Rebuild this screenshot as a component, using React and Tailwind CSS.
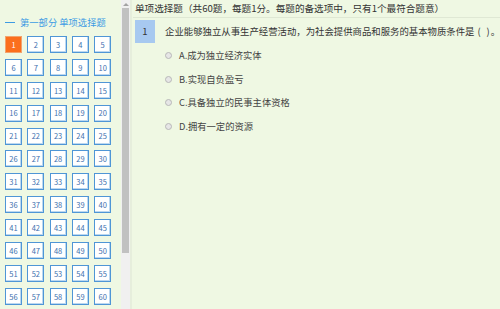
import React from 'react';

const font = { fontFamily: '"Noto Sans CJK SC", "Liberation Sans", sans-serif' };

const options = ['A.成为独立经济实体', 'B.实现自负盈亏', 'C.具备独立的民事主体资格', 'D.拥有一定的资源'];

function NumBox({ n, active }) {
  return (
    <div
      className={`w-[17px] h-[17px] flex items-center justify-center text-[7.5px] leading-none ${
        active
          ? 'bg-[#fb6f1d] border border-[#f2a46e] text-white'
          : 'bg-white border border-[#4f96d6] text-[#3d6fae] shadow-[inset_-1px_-1px_0_#bcd8f0]'
      }`}
    >
      {n}
    </div>
  );
}

export default function App() {
  const nums = Array.from({ length: 60 }, (_, i) => i + 1);
  return (
    <div className="w-[500px] h-[309px] flex overflow-hidden bg-[#eff8e3]" style={font}>
      {/* Left: question index */}
      <div className="w-[121px] shrink-0 pl-[5px] pt-[16px]">
        <div className="flex items-center h-[13px] text-[9.3px] text-[#3c9be3] leading-none">
          <span className="w-[10px] h-[1.5px] bg-[#3c9be3] mr-[5px]" />
          第一部分 单项选择题
        </div>
        <div className="mt-[7px] grid grid-cols-[repeat(5,17px)] gap-x-[5.3px] gap-y-[5.9px]">
          {nums.map(n => <NumBox key={n} n={n} active={n === 1} />)}
        </div>
      </div>

      {/* Left panel scrollbar */}
      <div className="w-[9px] shrink-0 bg-[#f0f0f0] flex flex-col">
        <div className="h-[8px] flex items-center justify-center">
          <div className="w-0 h-0 border-l-[3px] border-r-[3px] border-b-[3px] border-l-transparent border-r-transparent border-b-[#a3a3a3]" />
        </div>
        <div className="h-[245px] mx-[1px] bg-[#c1c1c1]" />
      </div>
      <div className="w-[2px] shrink-0 bg-[#e6eedc]" />

      {/* Right: question */}
      <div className="flex-1 min-w-0 pl-[1px] text-[#333]">
        <div className="h-[18px] border-b border-[#dfe8d4] flex items-center text-[9.6px] leading-none pl-[2px] whitespace-nowrap">
          单项选择题（共60题，每题1分。每题的备选项中，只有1个最符合题意）
        </div>
        <div className="flex items-center mt-[2px] pl-[2px]">
          <div className="w-[20px] h-[23px] shrink-0 bg-[#a7c9f0] flex items-center justify-center text-[9.5px] leading-none text-[#333]">1</div>
          <div className="ml-[10px] shrink-0 flex items-center text-[9.4px] leading-none whitespace-nowrap">
            <span>企业能够独立从事生产经营活动，为社会提供商品和服务的基本物质条件是</span>
            <span className="ml-[3px]">(</span>
            <span className="ml-[6px]">)</span>
            <span className="ml-[1px]">。</span>
          </div>
        </div>
        <div className="pl-[32px] pt-[1px] flex flex-col">
          {options.map(o => (
            <div key={o} className="h-[23.5px] flex items-center text-[9.3px] leading-none text-[#444]">
              <span className="w-[7px] h-[7px] rounded-full border border-[#b8b8b8] bg-[#e6e6e6] mr-[7px]" />
              {o}
            </div>
          ))}
        </div>
      </div>
    </div>
  );
}
